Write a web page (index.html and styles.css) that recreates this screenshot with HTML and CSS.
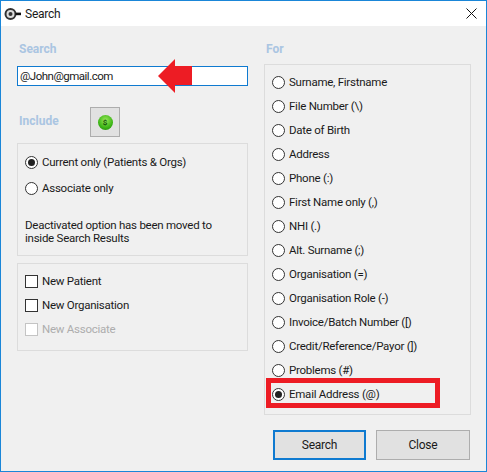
FILE: index.html
```html
<!DOCTYPE html>
<html>
<head>
<meta charset="utf-8" />
<title>Search</title>
<link rel="stylesheet" href="styles.css">
</head>
<body>
<div class="window">
  <div class="titlebar">
    <svg class="appicon" width="17" height="14" viewBox="0 0 17 14">
      <circle cx="6.5" cy="7" r="5" fill="#ddd" stroke="#333" stroke-width="2"/>
      <circle cx="6.5" cy="7" r="2" fill="#333"/>
      <rect x="11.5" y="5.6" width="5.5" height="2.6" fill="#111"/>
    </svg>
    <span class="title">Search</span>
    <svg class="closeicon" width="11" height="11" viewBox="0 0 11 11">
      <path d="M0.5 0.5L10.5 10.5M10.5 0.5L0.5 10.5" stroke="#111" stroke-width="1" fill="none"/>
    </svg>
  </div>
  <div class="content">
    <div class="leftcol">
      <div class="heading searchhead">Search</div>
      <div class="searchbox">@John@gmail.com</div>
      <div class="includerow">
        <div class="heading">Include</div>
        <div class="iconbtn"><span class="greenball">$</span></div>
      </div>
      <div class="group includegroup">
        <label class="opt first"><span class="radio on"></span>Current only (Patients &amp; Orgs)</label>
        <label class="opt second"><span class="radio"></span>Associate only</label>
        <p class="note">Deactivated option has been moved to<br />inside Search Results</p>
      </div>
      <div class="group newgroup">
        <label class="opt"><span class="check"></span>New Patient</label>
        <label class="opt"><span class="check"></span>New Organisation</label>
        <label class="opt disabled"><span class="check"></span>New Associate</label>
      </div>
    </div>
    <div class="rightcol">
      <div class="heading forhead">For</div>
      <div class="group forgroup">
        <label class="opt"><span class="radio"></span>Surname, Firstname</label>
        <label class="opt"><span class="radio"></span>File Number (\)</label>
        <label class="opt"><span class="radio"></span>Date of Birth</label>
        <label class="opt"><span class="radio"></span>Address</label>
        <label class="opt"><span class="radio"></span>Phone (:)</label>
        <label class="opt"><span class="radio"></span>First Name only (,)</label>
        <label class="opt"><span class="radio"></span>NHI (.)</label>
        <label class="opt"><span class="radio"></span>Alt. Surname (;)</label>
        <label class="opt"><span class="radio"></span>Organisation (=)</label>
        <label class="opt"><span class="radio"></span>Organisation Role (-)</label>
        <label class="opt"><span class="radio"></span>Invoice/Batch Number ([)</label>
        <label class="opt"><span class="radio"></span>Credit/Reference/Payor (])</label>
        <label class="opt"><span class="radio"></span>Problems (#)</label>
        <label class="opt"><span class="radio on"></span>Email Address (@)</label>
      </div>
      <div class="buttons">
        <div class="btn default">Search</div>
        <div class="btn">Close</div>
      </div>
    </div>
  </div>
  <!-- annotations drawn over the dialog -->
  <svg class="arrow" width="34" height="34" viewBox="0 0 34 34">
    <path d="M0 17L17 0V7H34V26H17V34Z" fill="#ed1c24"/>
  </svg>
  <div class="redbox"></div>
</div>
</body>
</html>
```

FILE: styles.css
```css
html, body {
  margin: 0;
  padding: 0;
}
body {
  width: 487px;
  height: 472px;
  overflow: hidden;
  font-family: Roboto, "Open Sans", sans-serif;
  font-size: 11.5px;
  letter-spacing: -0.25px;
  color: #1a1a1a;
}
.window {
  position: relative;
  box-sizing: border-box;
  width: 487px;
  height: 472px;
  border: 1px solid #1a86d8;
  background: #f0f0f0;
}
.titlebar {
  display: flex;
  align-items: center;
  height: 25px;
  background: #fff;
  padding: 0 9px 0 3px;
}
.title {
  margin-left: 4px;
  font-size: 12px;
  flex: 1;
}
.content {
  display: flex;
  padding-left: 16px;
}
.leftcol {
  width: 231px;
}
.rightcol {
  width: 207px;
  margin-left: 16px;
}
.heading {
  font-weight: bold;
  font-size: 12px;
  letter-spacing: 0;
  line-height: 16px;
  color: #aac5e2;
  padding-left: 2px;
}
.searchhead, .forhead {
  margin-top: 15px;
}
.searchbox {
  box-sizing: border-box;
  height: 20px;
  margin-top: 9px;
  padding-left: 2px;
  line-height: 18px;
  letter-spacing: -0.5px;
  background: #fff;
  border: 1px solid #0f7ad0;
}
.includerow {
  display: flex;
  align-items: center;
  margin-top: 21px;
}
.includerow .heading {
  width: 71px;
  padding-bottom: 2px;
}
.iconbtn {
  box-sizing: border-box;
  display: flex;
  align-items: center;
  justify-content: center;
  width: 30px;
  height: 30px;
  background: #e1e1e1;
  border: 1px solid #adadad;
}
.greenball {
  display: block;
  width: 15px;
  height: 15px;
  border-radius: 50%;
  background: radial-gradient(circle at 50% 35%, #9be85a, #3cb516 60%, #1d7d0a);
  color: #14550a;
  font-size: 8px;
  font-weight: bold;
  line-height: 15px;
  text-align: center;
}
.group {
  box-sizing: border-box;
  border: 1px solid #dcdcdc;
}
.includegroup {
  height: 113px;
  margin-top: 6px;
  padding: 6px 7px 0;
}
.newgroup {
  height: 88px;
  margin-top: 7px;
  padding: 5px 7px 0;
}
.forgroup {
  height: 351px;
  margin-top: 7px;
  padding: 5px 7px 0;
}
.opt {
  display: flex;
  align-items: center;
  height: 24px;
  white-space: nowrap;
}
.includegroup .second {
  margin-top: 2px;
}
.radio {
  box-sizing: border-box;
  flex: none;
  display: flex;
  align-items: center;
  justify-content: center;
  width: 13px;
  height: 13px;
  margin-right: 4px;
  background: #fff;
  border: 1px solid #333;
  border-radius: 50%;
}
.radio.on::after {
  content: "";
  width: 7px;
  height: 7px;
  border-radius: 50%;
  background: #222;
}
.check {
  box-sizing: border-box;
  flex: none;
  width: 13px;
  height: 13px;
  margin-right: 4px;
  background: #fff;
  border: 1px solid #333;
}
.disabled {
  color: #adadad;
}
.disabled .check {
  border-color: #c4c4c4;
}
.note {
  margin: 19px 0 0;
  line-height: 13px;
}
.buttons {
  display: flex;
  gap: 10px;
  margin-top: 15px;
  margin-left: 9px;
}
.btn {
  box-sizing: border-box;
  width: 94px;
  height: 30px;
  line-height: 28px;
  text-align: center;
  font-size: 12px;
  background: #e1e1e1;
  border: 1px solid #adadad;
}
.btn.default {
  width: 93px;
  border: 2px solid #0f7ad0;
  line-height: 26px;
}
.arrow {
  position: absolute;
  left: 157px;
  top: 58px;
}
.redbox {
  position: absolute;
  left: 265px;
  top: 377px;
  box-sizing: border-box;
  width: 174px;
  height: 30px;
  border: 5px solid #ed1c24;
}
```
